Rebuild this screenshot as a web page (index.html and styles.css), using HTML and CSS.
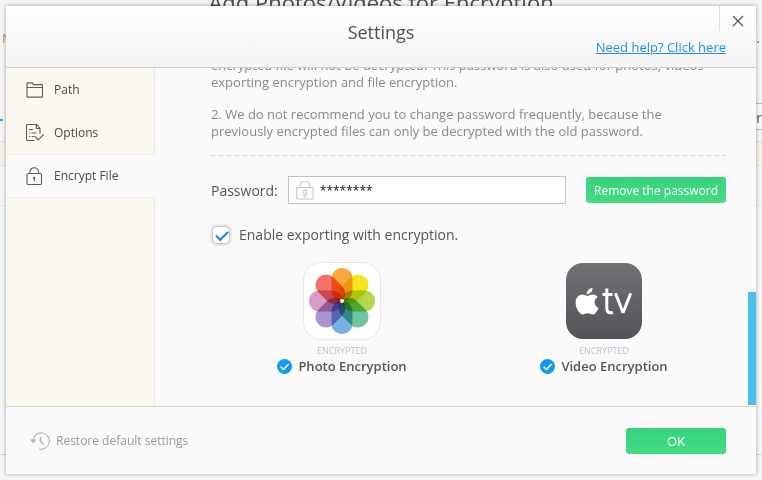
FILE: index.html
```html
<!DOCTYPE html>
<html lang="en">
<head>
<meta charset="utf-8">
<meta name="viewport" content="width=device-width, initial-scale=1">
<title>Settings</title>
<link rel="stylesheet" href="styles.css">
</head>
<body>
<div class="backdrop" aria-hidden="true">
  <p class="backdrop-title">Add Photos/Videos for Encryption</p>
  <span class="backdrop-note">N</span>
  <span class="backdrop-dot">.</span>
  <span class="backdrop-tab"></span>
  <span class="backdrop-field">r</span>
  <span class="backdrop-band"></span>
  <span class="backdrop-list"></span>
</div>

<section class="dialog" role="dialog" aria-labelledby="dialog-title">
  <header class="dialog-header">
    <h1 id="dialog-title" class="dialog-title">Settings</h1>
    <button class="close" type="button" aria-label="Close">
      <svg width="12" height="12" viewBox="0 0 12 12"><path d="M1 1l10 10M11 1L1 11" fill="none" stroke="#555" stroke-width="1.2"/></svg>
    </button>
    <a class="help-link" href="#help">Need help? Click here</a>
  </header>

  <div class="dialog-body">
    <nav class="sidebar">
      <a class="nav-item" href="#path">
        <svg width="18" height="18" viewBox="0 0 18 18" fill="none" stroke="#5c5c5c" stroke-width="1.1"><path d="M1 15.500V2.700q0-.8.8-.8h4.400l1.300 1.700h8.200q.8 0 .8.8v11.100q0 .6-.6.6H1.600q-.6 0-.6-.6zM1 6.500h15.500"/></svg>
        Path
      </a>
      <a class="nav-item" href="#options">
        <svg width="18" height="18" viewBox="0 0 18 18" fill="none" stroke="#5c5c5c" stroke-width="1.1"><path d="M8.500 16.500h-7q-1 0-1-1v-14q0-1 1-1h9L14 4.200v5.500M10.300 .8v3.700H14M3 5.500h4M3 9h1.200M5.500 9h5M3 12.500h1.200M5.500 12.500h3M9 12.500l3.200 3.400 5.600-5.600"/></svg>
        Options
      </a>
      <a class="nav-item nav-item-active" href="#encrypt" aria-current="page">
        <svg width="18" height="18" viewBox="0 0 18 18" fill="none" stroke="#5c5c5c" stroke-width="1.1"><rect x="1" y="6.500" width="14.500" height="11" rx="1.300"/><path d="M4 6.500V5a4.250 4.250 0 0 1 8.500 0v1.500"/><circle cx="8.250" cy="11" r="1.200" fill="#5c5c5c" stroke="none"/><path d="M8.250 11v3.200"/></svg>
        Encrypt File
      </a>
      <div class="sidebar-rest"></div>
    </nav>

    <main class="content">
      <p class="note">1. Please remember your password. Without it, the<br>encrypted file will not be decrypted. This password is also used for photos, videos exporting encryption and file encryption.</p>
      <p class="note">2. We do not recommend you to change password frequently, because the previously encrypted files can only be decrypted with the old password.</p>
      <svg class="rule" height="1"><line x1="0" y1=".5" x2="100%" y2=".5" stroke="#cfcfcf" stroke-dasharray="4 4"/></svg>

      <form class="password-row">
        <label for="password">Password:</label>
        <div class="password-field">
          <svg width="18" height="20" viewBox="0 0 18 20" fill="none" stroke="#c6c6c6" stroke-width="1.1"><rect x=".6" y="7.500" width="16.500" height="11.500" rx="1"/><path d="M3.800 7.500V6a5 5 0 0 1 10 0v1.500"/><path d="M8 13.700a2 2 0 1 1 1.800 0v2.800H8z"/></svg>
          <input id="password" type="text" value="********" autocomplete="off">
        </div>
        <button class="button" type="button">Remove the password</button>
      </form>

      <div class="enable-row">
        <input id="enable" type="checkbox" checked>
        <label for="enable">Enable exporting with encryption.</label>
      </div>

      <div class="kinds">
        <div class="kind">
          <svg class="kind-icon" width="78" height="78" viewBox="0 0 78 78">
            <rect x=".5" y=".5" width="77" height="77" rx="18" fill="#fff" stroke="#e6e6e6"/>
            <g class="petals" transform="translate(39 39)">
              <rect x="-10.500" y="-33" width="21" height="33" rx="10" fill="#f9a840"/>
              <rect x="-10.500" y="-33" width="21" height="33" rx="10" fill="#f4e51c" transform="rotate(45)"/>
              <rect x="-10.500" y="-33" width="21" height="33" rx="10" fill="#b6d84e" transform="rotate(90)"/>
              <rect x="-10.500" y="-33" width="21" height="33" rx="10" fill="#70c4a0" transform="rotate(135)"/>
              <rect x="-10.500" y="-33" width="21" height="33" rx="10" fill="#78b0e4" transform="rotate(180)"/>
              <rect x="-10.500" y="-33" width="21" height="33" rx="10" fill="#a996cd" transform="rotate(225)"/>
              <rect x="-10.500" y="-33" width="21" height="33" rx="10" fill="#d99cc4" transform="rotate(270)"/>
              <rect x="-10.500" y="-33" width="21" height="33" rx="10" fill="#f47068" transform="rotate(315)"/>
            </g>
            <circle cx="39" cy="39" r="2" fill="#fff"/>
          </svg>
          <span class="kind-state">ENCRYPTED</span>
          <span class="kind-name">
            <svg width="15" height="15" viewBox="0 0 15 15"><circle cx="7.500" cy="7.500" r="7.500" fill="#129af0"/><path d="M3.700 7.800l2.700 2.700 5.200-5.600" fill="none" stroke="#fff" stroke-width="1.500"/></svg>
            Photo Encryption
          </span>
        </div>
        <div class="kind">
          <svg class="kind-icon" width="78" height="78" viewBox="0 0 78 78">
            <defs><linearGradient id="tv" x2="0" y2="1"><stop stop-color="#727176"/><stop offset="1" stop-color="#535257"/></linearGradient></defs>
            <rect x="1" y="1" width="76" height="76" rx="17" fill="url(#tv)"/>
            <path fill="#fff" d="M27.500 26c.3 3.400-2.700 6.300-5.700 6.200-.3-3.200 2.600-6 5.700-6.200zM22.200 33.800c1.500 0 3-1.400 5.500-1.400 2 0 3.900 1 5 2.700-4.600 2.800-3.900 9 .7 10.800-1 2.800-3.200 6.500-5.700 6.500-2 0-2.600-1.200-5-1.200s-3.200 1.200-5.100 1.200c-3.200 0-7-6.600-7-11.700 0-5.200 3.300-8.200 6.700-8.200 2.200 0 3.500 1.300 4.900 1.300z"/>
            <path fill="none" stroke="#fff" stroke-width="3" d="M41.800 26.500V46q0 4.800 4 4.800 1.300 0 2.200-.4M37.500 32.500h10M50.500 31.200l7.600 19.500 7.600-19.500" stroke-linejoin="bevel"/>
          </svg>
          <span class="kind-state">ENCRYPTED</span>
          <span class="kind-name">
            <svg width="15" height="15" viewBox="0 0 15 15"><circle cx="7.500" cy="7.500" r="7.500" fill="#129af0"/><path d="M3.700 7.800l2.700 2.700 5.200-5.600" fill="none" stroke="#fff" stroke-width="1.500"/></svg>
            Video Encryption
          </span>
        </div>
      </div>
      <span class="scroll-thumb"></span>
    </main>
  </div>

  <footer class="dialog-footer">
    <button class="restore" type="button">
      <svg width="20" height="18" viewBox="0 0 20 18" fill="none" stroke="#b5b5b5" stroke-width="1.2"><path d="M3 8.500A8.200 8.200 0 1 1 9 17"/><path d="M10.500 5v4.500l3 3" stroke-width="1.600"/><path d="M0 7.500h6.500L3.200 11.500z" fill="#b5b5b5" stroke="none"/></svg>
      Restore default settings
    </button>
    <button class="button button-ok" type="button">OK</button>
  </footer>
</section>
</body>
</html>
```
FILE: styles.css
```css
* {
  box-sizing: border-box;
}

body {
  margin: 0;
  padding: 6px;
  height: 100vh;
  overflow: hidden;
  background: #f5f5f5;
  color: #555;
  font-family: "Open Sans", "Noto Sans", sans-serif;
  font-size: 13px;
}

h1,
p {
  margin: 0;
}

button,
input {
  font: inherit;
}

svg {
  display: block;
  flex: none;
}

/* Window behind the dialog; only its edges show */
.backdrop {
  position: absolute;
  inset: 0;
  overflow: hidden;
}

.backdrop > * {
  position: absolute;
}

.backdrop-title {
  top: -13px;
  left: 0;
  right: 0;
  color: #4c4c4c;
  font-size: 22px;
  line-height: 30px;
  text-align: center;
}

.backdrop-note {
  top: 29px;
  left: 2px;
  color: #c58c56;
}

.backdrop-dot {
  top: 29px;
  right: 2px;
}

.backdrop-tab {
  top: 119px;
  left: 0;
  width: 3px;
  height: 2px;
  background: #2a9fe0;
}

.backdrop-field {
  top: 103px;
  right: 0;
  width: 20px;
  height: 27px;
  border: 1px solid #bbb;
  border-right: 0;
  background: #fafafa;
  font-size: 14px;
  line-height: 28px;
  text-align: right;
}

.backdrop-band {
  top: 141px;
  left: 0;
  right: 0;
  height: 25px;
  border-top: 1px solid #ddd;
  border-bottom: 1px solid #e4e4e4;
  background: #f6f3ea;
}

.backdrop-list {
  top: 205px;
  left: 0;
  right: 0;
  height: 250px;
  border-top: 1px solid #e6e6e6;
  border-bottom: 1px solid #d4d4d4;
  background: #f5f6f8;
}

.dialog {
  position: relative;
  display: flex;
  flex-direction: column;
  height: 100%;
  background: #fafafa;
  box-shadow: 0 0 4px rgba(0, 0, 0, 0.35);
}

.dialog-header {
  position: relative;
  flex: none;
  height: 62px;
  padding-top: 12px;
  border-bottom: 1px solid #cfcfcf;
  background: linear-gradient(#fff, #f4f4f4);
}

.dialog-title {
  color: #505050;
  font-size: 18px;
  font-weight: 400;
  line-height: 28px;
  text-align: center;
}

.close {
  position: absolute;
  top: 0;
  right: 0;
  display: grid;
  place-items: center;
  width: 37px;
  height: 25px;
  padding: 4px 0 0;
  border: 0;
  border-left: 1px solid #dcdcdc;
  background: none;
}

.help-link {
  position: absolute;
  right: 30px;
  bottom: 10px;
  color: #1e8fe6;
  line-height: 20px;
}

.dialog-body {
  display: flex;
  flex: 1;
  min-height: 0;
}

.sidebar {
  display: flex;
  flex: none;
  flex-direction: column;
  width: 149px;
  background: #fafafa;
}

.nav-item {
  display: flex;
  align-items: center;
  gap: 10px;
  height: 43px;
  padding-left: 20px;
  border-right: 1px solid #ebe9e3;
  background: #fbf8f0;
  color: #484848;
  font-size: 12px;
  text-decoration: none;
}

.nav-item-active {
  border-right: 0;
  background: #fafafa;
  box-shadow: inset 0 1px #ebe9e3;
}

.sidebar-rest {
  flex: 1;
  border-top: 1px solid #ebe9e3;
  border-right: 1px solid #ebe9e3;
  border-top-right-radius: 3px;
  background: #fbf8f0;
}

.content {
  position: relative;
  display: flex;
  flex: 1;
  flex-direction: column;
  justify-content: flex-end;
  min-width: 0;
  padding: 0 30px 31px 56px;
  overflow: hidden;
}

.note {
  margin-bottom: 15px;
  color: #888;
  line-height: 17px;
}

.rule {
  width: 100%;
}

.password-row {
  display: flex;
  align-items: center;
  gap: 10px;
  margin-top: 20px;
  font-size: 14px;
}

.password-field {
  display: flex;
  flex: 1;
  align-items: center;
  gap: 6px;
  min-width: 0;
  height: 28px;
  margin-right: 10px;
  padding-left: 7px;
  border: 1px solid #c4c4c4;
  background: #fff;
}

.password-field input {
  flex: 1;
  min-width: 0;
  padding: 0;
  border: 0;
  outline: 0;
  background: none;
  color: #111;
  font-size: 12px;
}

.button {
  flex: none;
  width: 140px;
  height: 26px;
  padding: 0;
  border: 0;
  border-radius: 3px;
  background: linear-gradient(#36d280, #44dc80);
  color: #fff;
  font-size: 12px;
}

.enable-row {
  display: flex;
  align-items: center;
  gap: 8px;
  margin-top: 21px;
  font-size: 14px;
  line-height: 20px;
}

.enable-row input {
  width: 16px;
  height: 16px;
  margin: 2px;
  border-radius: 4px;
  appearance: none;
  background: #fff;
  box-shadow: 0 0 1px 1px #c4c4c4, 0 0 0 3px #ebebeb;
}

.enable-row input:checked::after {
  content: "";
  display: block;
  width: 10px;
  height: 5px;
  margin: 4px 3px;
  border-bottom: 2px solid #2585c7;
  border-left: 2px solid #2585c7;
  transform: rotate(-45deg);
}

.kinds {
  display: grid;
  grid-template-columns: 1fr 1fr;
  margin: 17px -9px 0 0;
}

.kind {
  display: flex;
  flex-direction: column;
  align-items: center;
}

.petals rect {
  mix-blend-mode: multiply;
}

.kind-state {
  margin-top: 4px;
  color: #b9c4d0;
  font-size: 9px;
  line-height: 13px;
}

.kind-name {
  display: flex;
  align-items: center;
  gap: 6px;
  color: #555;
  font-size: 13px;
  font-weight: 600;
  line-height: 18px;
}

.scroll-thumb {
  position: absolute;
  right: 0;
  bottom: 1px;
  width: 8px;
  height: 113px;
  background: #48c0e8;
}

.dialog-footer {
  display: flex;
  flex: none;
  align-items: center;
  justify-content: space-between;
  height: 68px;
  padding: 0 30px 0 24px;
  border-top: 1px solid #d6d6d6;
}

.restore {
  display: flex;
  align-items: center;
  gap: 6px;
  padding: 0;
  border: 0;
  background: none;
  color: #999;
  font-size: 12px;
}

.button-ok {
  width: 100px;
  font-size: 13px;
}
```
